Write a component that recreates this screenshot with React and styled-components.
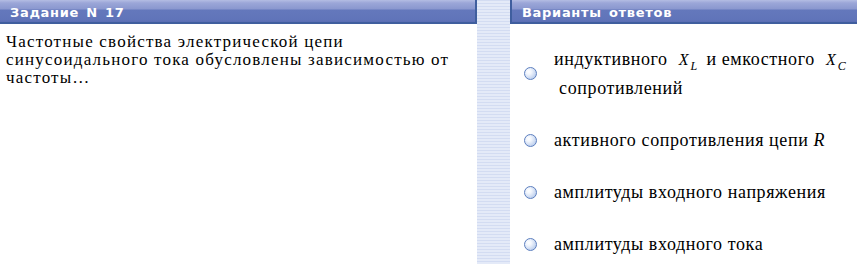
import React from 'react';
import styled, { createGlobalStyle } from 'styled-components';

const GlobalStyle = createGlobalStyle`
  html, body {
    margin: 0;
    padding: 0;
    background: #ffffff;
  }
`;

const getOptions = () => [
  {
    id: 1,
    content: (
      <>
        индуктивного <Var>X<Sub>L</Sub></Var> и емкостного <Var>X<Sub>C</Sub></Var>
        <br />
        {'\u00a0'}сопротивлений
      </>
    ),
  },
  { id: 2, content: <>активного сопротивления цепи <Var $big>R</Var></> },
  { id: 3, content: <>амплитуды входного напряжения</> },
  { id: 4, content: <>амплитуды входного тока</> },
];

const App = () => (
  <>
    <GlobalStyle />
    <Page>
      <Panel>
        <Header>Задание N 17</Header>
        <Question>
          Частотные свойства электрической цепи
          <br />
          синусоидального тока обусловлены зависимостью от
          <br />
          частоты…
        </Question>
      </Panel>
      <Divider />
      <Panel>
        <Header $right>Варианты ответов</Header>
        <Options>
          {getOptions().map(o => (
            <Option key={o.id}>
              <Radio />
              <OptionText>{o.content}</OptionText>
            </Option>
          ))}
        </Options>
      </Panel>
    </Page>
  </>
);

export default App;

const Page = styled.div`
  display: grid;
  grid-template-columns: 477px 33px 1fr;
  height: 264px;
  width: 857px;
  overflow: hidden;
`;

const Panel = styled.div`
  display: flex;
  flex-direction: column;
  min-width: 0;
`;

const Header = styled.div`
  box-sizing: border-box;
  height: 24px;
  padding: 3px 10px 0;
  display: flex;
  align-items: center;
  font-family: 'DejaVu Sans', sans-serif;
  font-weight: bold;
  font-size: 13px;
  letter-spacing: 0.7px;
  word-spacing: 2px;
  white-space: nowrap;
  color: #ffffff;
  background: linear-gradient(
    to bottom,
    #b4bde3 0px,
    #9ba6d8 3px,
    #8a97cf 9px,
    #6478bc 10px,
    #6074b9 20px,
    #5a6db4 22px
  );
  border-bottom: 2px solid #3f5e9e;
  ${p =>
    p.$right
      ? 'border-left: 2px solid #3f5e9e;'
      : 'border-right: 2px solid #3f5e9e;'}
`;

const Divider = styled.div`
  background: repeating-linear-gradient(
    to bottom,
    #d3dcf2 0px,
    #d3dcf2 1px,
    #e4eaf8 1px,
    #e4eaf8 3px
  );
`;

const serif = `'Liberation Serif', 'Times New Roman', serif`;

const Question = styled.p`
  margin: 9px 0 0 6px;
  font-family: ${serif};
  font-size: 17px;
  letter-spacing: 1.2px;
  line-height: 18px;
  white-space: nowrap;
  color: #000000;
`;

const Options = styled.div`
  display: flex;
  flex-direction: column;
  gap: 24px;
  padding: 21px 0 0 14px;
`;

const Option = styled.div`
  display: flex;
  align-items: center;
  gap: 17px;
`;

const Radio = styled.span`
  flex: none;
  box-sizing: border-box;
  width: 13px;
  height: 13px;
  border-radius: 50%;
  border: 1px solid #5d7fbf;
  background: radial-gradient(
    circle at 35% 35%,
    #ffffff 0,
    #f2f6fd 25%,
    #c9d8f1 65%,
    #a9bfe6 100%
  );
`;

const OptionText = styled.div`
  font-family: ${serif};
  font-size: 18px;
  letter-spacing: 0.6px;
  line-height: 28px;
  white-space: nowrap;
  color: #000000;
`;

const Var = styled.span`
  font-style: italic;
  font-size: ${p => (p.$big ? 18 : 16)}px;
  letter-spacing: 0;
  margin: ${p => (p.$big ? '0' : '0 4px 0 6px')};
`;

const Sub = styled.sub`
  font-size: 12px;
  margin-left: 2px;
  vertical-align: -5px;
  line-height: 0;
`;
